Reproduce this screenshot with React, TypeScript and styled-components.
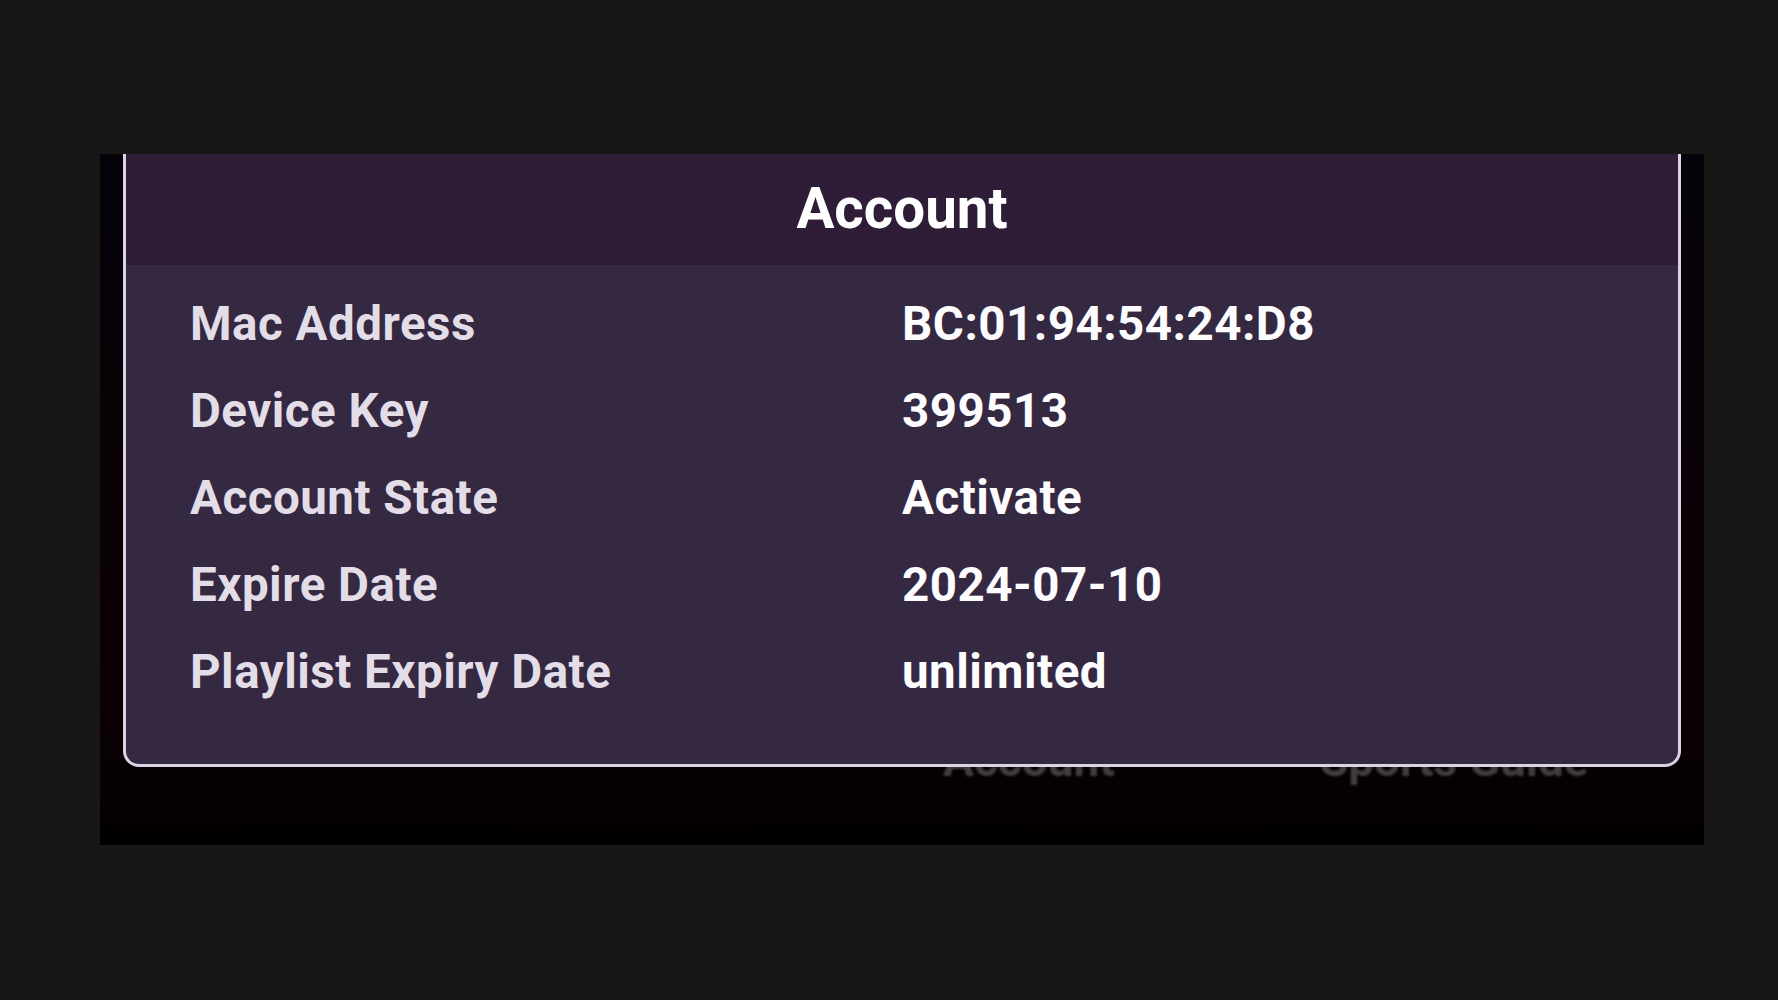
import React from "react";
import styled, { createGlobalStyle } from "styled-components";

const GlobalStyle = createGlobalStyle`
  html, body { margin: 0; padding: 0; background: #191715; }
  body { font-family: Roboto, "Noto Sans", "Liberation Sans", sans-serif; }
`;

const Page = styled.div`
  width: 1778px;
  height: 1000px;
  box-sizing: border-box;
  padding: 154px 0 0 100px;
  background: #191715;
`;

const Frame = styled.div`
  position: relative;
  width: 1604px;
  height: 691px;
  box-sizing: border-box;
  overflow: hidden;
  background: linear-gradient(180deg, #05020a 0%, #0b0206 55%, #0c0104 80%, #020001 100%);
`;

const MenuRow = styled.div`
  display: flex;
  gap: 205px;
  padding: 581px 0 0 843px;
  font-size: 46px;
  font-weight: 700;
  line-height: 50px;
  color: #423c40;
  filter: blur(1.2px);
`;

const Dialog = styled.section`
  position: absolute;
  top: 0;
  left: 23px;
  right: 23px;
  height: 613px;
  box-sizing: border-box;
  border: 3px solid #dcd3e2;
  border-top: none;
  border-radius: 0 0 16px 16px;
  background: #352841;
  overflow: hidden;
  display: flex;
  flex-direction: column;
`;

const Header = styled.header`
  height: 111px;
  flex: none;
  background: #2f1d37;
  display: flex;
  align-items: center;
  justify-content: center;
`;

const Title = styled.h1`
  margin: 0;
  font-size: 56.5px;
  line-height: 1;
  font-weight: 700;
  color: #ffffff;
`;

const Body = styled.div`
  display: grid;
  grid-template-columns: 1fr 1fr;
  padding: 16px 64px 0;
`;

const Cell = styled.div<{ $value?: boolean }>`
  height: 87px;
  font-size: 47.5px;
  letter-spacing: 0.5px;
  line-height: 87px;
  font-weight: 700;
  white-space: nowrap;
  color: ${(p) => (p.$value ? "#fdfcff" : "#e3dde8")};
`;

const rows: [string, string][] = [
  ["Mac Address", "BC:01:94:54:24:D8"],
  ["Device Key", "399513"],
  ["Account State", "Activate"],
  ["Expire Date", "2024-07-10"],
  ["Playlist Expiry Date", "unlimited"],
];

export default function App() {
  return (
    <>
      <GlobalStyle />
      <Page>
        <Frame>
          <MenuRow>
            <span>Account</span>
            <span>Sports Guide</span>
          </MenuRow>
          <Dialog>
            <Header>
              <Title>Account</Title>
            </Header>
            <Body>
              {rows.map(([k, v]) => (
                <React.Fragment key={k}>
                  <Cell>{k}</Cell>
                  <Cell $value>{v}</Cell>
                </React.Fragment>
              ))}
            </Body>
          </Dialog>
        </Frame>
      </Page>
    </>
  );
}
